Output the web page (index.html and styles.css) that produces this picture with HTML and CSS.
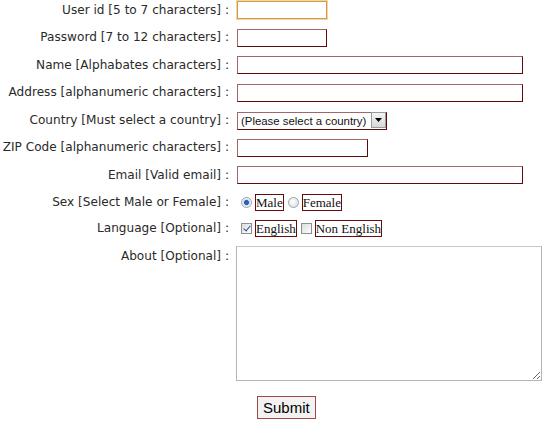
FILE: index.html
```html
<!DOCTYPE html>
<html>
<head>
<meta charset="utf-8">
<link rel="stylesheet" href="styles.css">
</head>
<body>
<form class="form">
  <label class="lbl">User id [5 to 7 characters] :</label>
  <div class="ctl"><input class="txt w-90 focus" type="text"></div>

  <label class="lbl">Password [7 to 12 characters] :</label>
  <div class="ctl"><input class="txt w-90" type="password"></div>

  <label class="lbl">Name [Alphabates characters] :</label>
  <div class="ctl"><input class="txt w-286" type="text"></div>

  <label class="lbl">Address [alphanumeric characters] :</label>
  <div class="ctl"><input class="txt w-286" type="text"></div>

  <label class="lbl">Country [Must select a country] :</label>
  <div class="ctl">
    <span class="select-wrap">
      <select class="sel"><option>(Please select a country)</option></select>
      <span class="arrow"><svg width="7" height="4" viewBox="0 0 7 4"><path d="M0 0h7L3.5 4z" fill="#000"/></svg></span>
    </span>
  </div>

  <label class="lbl">ZIP Code [alphanumeric characters] :</label>
  <div class="ctl"><input class="txt w-131" type="text"></div>

  <label class="lbl">Email [Valid email] :</label>
  <div class="ctl"><input class="txt w-286" type="text"></div>

  <label class="lbl">Sex [Select Male or Female] :</label>
  <div class="ctl choices">
    <input class="radio" type="radio" name="sex" checked><span class="opt">Male</span>
    <input class="radio" type="radio" name="sex"><span class="opt">Female</span>
  </div>

  <label class="lbl">Language [Optional] :</label>
  <div class="ctl choices">
    <input class="check" type="checkbox" checked><span class="opt">English</span>
    <input class="check" type="checkbox"><span class="opt">Non English</span>
  </div>

  <label class="lbl lbl-top">About [Optional] :</label>
  <div class="ctl"><textarea class="area"></textarea></div>

  <div></div>
  <div class="ctl submit-row"><button class="btn" type="button">Submit</button></div>
</form>
</body>
</html>
```

FILE: styles.css
```css
html, body {
  margin: 0;
  padding: 0;
  background: #fff;
}

.form {
  display: grid;
  grid-template-columns: 229px 1fr;
  column-gap: 8px;
  row-gap: 9.5px;
  align-items: center;
  padding-top: 1px;
}

.lbl {
  font-family: "DejaVu Sans", Verdana, sans-serif;
  font-size: 12.1px;
  color: #2a2a2a;
  text-align: right;
  white-space: nowrap;
  line-height: 17px;
}

.lbl-top {
  align-self: start;
  padding-top: 1px;
}

.ctl {
  display: flex;
  align-items: center;
  min-height: 17px;
}

.txt {
  box-sizing: border-box;
  height: 18px;
  margin: 0;
  padding: 0 2px;
  border: 1px solid;
  border-color: #a06868 #5c0a0a #5c0a0a #a06868;
  background: #fff;
  font-family: "Liberation Sans", Arial, sans-serif;
  font-size: 12px;
  outline: none;
}

.focus {
  border: 1px solid #d49a45;
  box-shadow: 0 0 0 1px #f2d6a2;
}

.w-90 { width: 90px; }
.w-131 { width: 131px; }
.w-286 { width: 286px; }

.select-wrap {
  position: relative;
  display: inline-block;
  width: 150px;
  height: 18px;
}

.sel {
  box-sizing: border-box;
  width: 150px;
  height: 18px;
  margin: 0;
  padding: 0 0 0 3px;
  appearance: none;
  -webkit-appearance: none;
  border: 1px solid;
  border-color: #a06868 #5c0a0a #5c0a0a #a06868;
  background: #fff;
  font-family: "Liberation Sans", Arial, sans-serif;
  font-size: 11.4px;
  color: #111;
  outline: none;
}

.arrow {
  position: absolute;
  right: 1px;
  top: 1px;
  box-sizing: border-box;
  width: 15px;
  height: 16px;
  display: flex;
  align-items: center;
  justify-content: center;
  background: linear-gradient(#f4f4f4, #d8d8d8);
  border: 1px solid #9a9a9a;
}

.radio, .check {
  appearance: none;
  -webkit-appearance: none;
  box-sizing: border-box;
  width: 11px;
  height: 11px;
  margin: 0 3px 0 4px;
  position: relative;
  flex: none;
}

.radio {
  border-radius: 50%;
  border: 1px solid #9aa3ad;
  background: radial-gradient(circle at 40% 40%, #ffffff, #d6d9dd);
}

.radio:checked {
  background: radial-gradient(circle, #2d5fb8 0 2.2px, #c7d6ee 2.6px, #ffffff 5px);
}

.check {
  border: 1px solid #8e8f8f;
  background: linear-gradient(135deg, #dcdcdc, #ffffff);
}

.check:checked::after {
  content: "";
  position: absolute;
  left: 3px;
  top: 0px;
  width: 3px;
  height: 6px;
  border: solid #2a4e9a;
  border-width: 0 1.5px 1.5px 0;
  transform: rotate(40deg);
}

.opt {
  font-family: "Liberation Serif", "Times New Roman", serif;
  font-size: 13px;
  line-height: 15px;
  color: #111;
  border: 1px solid #6a0a0a;
}

.area {
  box-sizing: border-box;
  width: 306px;
  height: 135px;
  margin: -1px 0 0 -1px;
  border: 1px solid #b3b3b3;
  border-top-color: #c8c8c8;
  resize: both;
  outline: none;
}

.submit-row {
  padding-top: 6px;
}

.btn {
  box-sizing: border-box;
  margin-left: 20px;
  height: 23px;
  padding: 0 5px;
  border: 1px solid #a04848;
  background: #f2f2f2;
  font-family: "Liberation Sans", Arial, sans-serif;
  font-size: 15px;
  color: #000;
}
```
